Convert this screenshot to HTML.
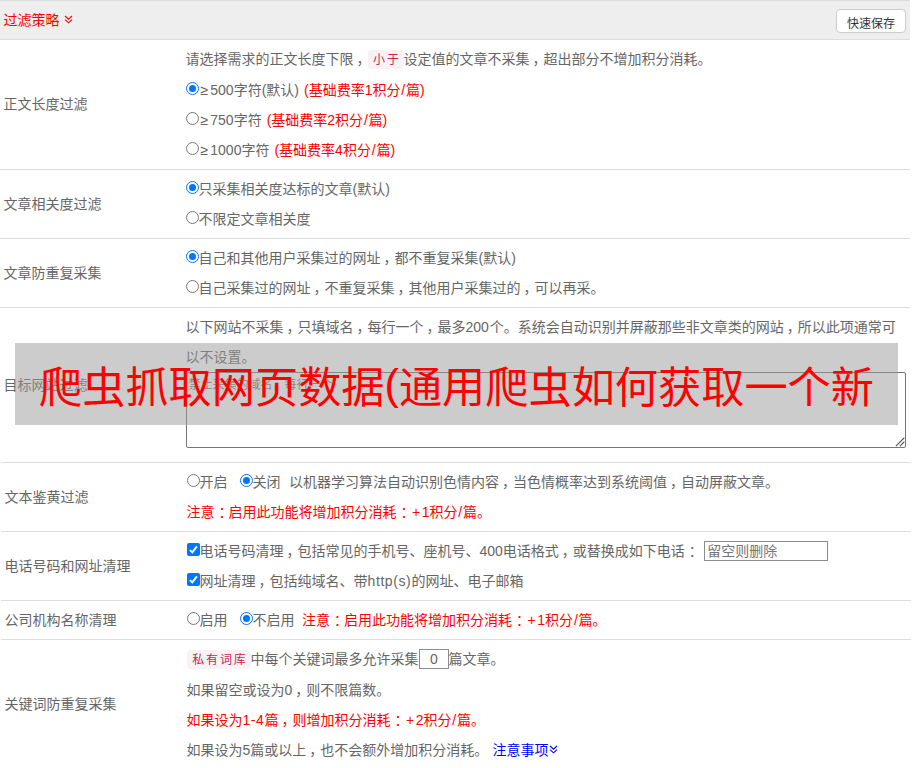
<!DOCTYPE html>
<html lang="zh-CN">
<head>
<meta charset="utf-8">
<title>过滤策略</title>
<style>
html,body{margin:0;padding:0;background:#fff;}
body{width:912px;height:768px;overflow:hidden;position:relative;
  font-family:"Liberation Sans","Noto Sans CJK SC",sans-serif;font-size:14px;line-height:30px;color:#666;}
#wrap{position:absolute;left:0;top:0;width:910px;}
.hd{height:38px;background:#eee;border-top:1px solid #ddd;border-bottom:1px solid #ddd;position:relative;}
.hd .t{position:absolute;left:3.5px;top:4px;color:#f00;line-height:30px;white-space:nowrap;}
.hd .btn{position:absolute;left:836px;top:8px;width:70px;height:24px;box-sizing:border-box;border:1px solid #ccc;border-radius:4px;background:#fff;
  color:#333;font-size:12px;line-height:28px;text-align:center;font-family:inherit;padding:0 0 0 0;overflow:visible;}
.row{border-top:1px solid #ddd;position:relative;box-sizing:border-box;width:910px;}
.sh{margin-left:1px;}
.lab{position:absolute;left:3.5px;line-height:30px;white-space:nowrap;}
.c{position:absolute;left:185.5px;top:4px;right:4px;}
.l{height:30px;line-height:30px;white-space:nowrap;position:relative;}
.l b{font-weight:normal;display:inline-block;text-align:center;}
.red{color:#f00;}
.rd{display:inline-block;width:13px;height:13px;box-sizing:border-box;border:1px solid #767676;border-radius:50%;background:#fff;vertical-align:middle;position:relative;top:-3px;margin:0 -.5px 0 .5px;}
.rd.on{border-color:#0075ff;}
.rd.on:after{content:"";position:absolute;left:2px;top:2px;width:7px;height:7px;border-radius:50%;background:#0075ff;}
.cb{display:inline-block;width:13px;height:13px;box-sizing:border-box;border-radius:2px;background:#0075ff;vertical-align:middle;position:relative;top:-3px;margin:0 -.5px 0 .5px;}
.cb svg{position:absolute;left:0;top:0;}
code{margin-left:.5px;margin-right:-.5px;display:inline-block;box-sizing:border-box;height:19px;vertical-align:top;margin-top:6px;font-family:"Liberation Mono","Noto Sans CJK SC",monospace;font-size:12px;color:#c7254e;background:#f9f2f4;border-radius:4px;padding:0 0 0 1.9px;line-height:22px;letter-spacing:1.9px;overflow:hidden;text-align:center;}
.l1{height:31px;}
.pc{position:relative;left:3px;}
.co{position:relative;left:4px;}
.ti{margin-left:.5px;margin-right:-.5px;display:inline-block;position:relative;top:-1px;box-sizing:border-box;border:1px solid #8c8c8c;background:#fff;vertical-align:middle;font-size:14px;color:#757575;}
.ta{position:absolute;left:.5px;top:60px;width:720px;height:76px;box-sizing:border-box;border:1px solid #767676;border-radius:2px;}
.ta .ph{position:absolute;left:1.5px;top:3px;font-size:12px;line-height:18px;color:#757575;}
.ta svg{position:absolute;right:0;bottom:0;}
#wm{position:absolute;left:15px;top:343px;width:883px;height:82px;background:rgba(153,153,153,0.5);color:#f00;font-size:43.2px;line-height:90px;text-align:center;overflow:hidden;box-sizing:border-box;white-space:nowrap;z-index:5;}
.g{display:inline-block;}
.pa{position:relative;top:-4px;}
.chev{position:relative;top:-0.8px;}
</style>
</head>
<body>
<div id="wrap">
<div class="hd"><span class="t">过滤策略<i class="g" style="width:4px"></i><svg class="chev" width="9" height="9" viewBox="0 0 9 9"><path d="M1 1L4.5 4.2L8 1M1 4.6L4.5 7.8L8 4.6" stroke="currentColor" stroke-width="1.12" fill="none"/></svg></span><button class="btn">快速保存</button></div>
<div class="row" style="height:129px;border-top:0">
  <div class="lab" style="top:49px">正文长度过滤</div>
  <div class="c">
    <div class="l l1">请选择需求的正文长度下限<span class="pc">，</span><code style="width:36px">小于</code>设定值的文章不采集<span class="pc">，</span>超出部分不增加积分消耗。</div>
    <div class="l"><span class="rd on"></span><b style="width:11.8px">≥</b>500字符(默认)<i class="g" style="width:5px"></i><span class="red">(基础费率1积分<b style="width:5.5px">/</b>篇)</span></div>
    <div class="l"><span class="rd"></span><b style="width:11.8px">≥</b>750字符<i class="g" style="width:5px"></i><span class="red">(基础费率2积分<b style="width:5.5px">/</b>篇)</span></div>
    <div class="l"><span class="rd"></span><b style="width:11.8px">≥</b>1000字符<i class="g" style="width:5px"></i><span class="red">(基础费率4积分<b style="width:5.5px">/</b>篇)</span></div>
  </div>
</div>
<div class="row" style="height:69px">
  <div class="lab" style="top:19px">文章相关度过滤</div>
  <div class="c">
    <div class="l"><span class="rd on"></span>只采集相关度达标的文章(默认)</div>
    <div class="l"><span class="rd"></span>不限定文章相关度</div>
  </div>
</div>
<div class="row" style="height:69px">
  <div class="lab" style="top:19px">文章防重复采集</div>
  <div class="c">
    <div class="l"><span class="rd on"></span>自己和其他用户采集过的网址<span class="pc">，</span>都不重复采集(默认)</div>
    <div class="l"><span class="rd"></span>自己采集过的网址<span class="pc">，</span>不重复采集<span class="pc">，</span>其他用户采集过的<span class="pc">，</span>可以再采。</div>
  </div>
</div>
<div class="row" style="height:155px">
  <div class="lab" style="top:62px">目标网站过滤</div>
  <div class="c">
    <div class="l">以下网站不采集<span class="pc">，</span>只填域名<span class="pc">，</span>每行一个<span class="pc">，</span>最多200<i class="g" style="width:1px"></i>个。系统会自动识别并屏蔽那些非文章类的网站<span class="pc">，</span>所以此项通常可</div>
    <div class="l">以不设置。</div>
    <div class="ta"><span class="ph">禁止采集的域名，每行一个</span><svg width="10" height="10" viewBox="0 0 10 10"><path d="M1.2 8.8L9 1M5.2 8.8L9 5" stroke="#555" stroke-width="1.1" stroke-linecap="round" fill="none"/></svg></div>
  </div>
</div>
<div class="row sh" style="height:69px">
  <div class="lab" style="top:19px">文本鉴黄过滤</div>
  <div class="c">
    <div class="l"><span class="rd"></span>开启<i class="g" style="width:12px"></i><span class="rd on"></span>关闭<i class="g" style="width:8.6px"></i>以机器学习算法自动识别色情内容<span class="pc">，</span>当色情概率达到系统阈值<span class="pc">，</span>自动屏蔽文章。</div>
    <div class="l"><span class="red">注意<span class="co">：</span>启用此功能将增加积分消耗<span class="co">：</span><b style="width:11.2px">+</b>1积分<b style="width:5.5px">/</b>篇。</span></div>
  </div>
</div>
<div class="row sh" style="height:69px">
  <div class="lab" style="top:19px">电话号码和网址清理</div>
  <div class="c">
    <div class="l"><span class="cb"><svg width="13" height="13" viewBox="0 0 13 13"><path d="M2.9 7.1L5.3 9.3L9.9 3.3" stroke="#fff" stroke-width="1.9" fill="none"/></svg></span>电话号码清理<span class="pc">，</span>包括常见的手机号、座机号、400电话格式<span class="pc">，</span>或替换成如下电话<span class="co">：</span><i class="g" style="width:5px"></i><span class="ti" style="width:124px;height:20px;line-height:18px;padding-left:2px;">留空则删除</span></div>
    <div class="l"><span class="cb"><svg width="13" height="13" viewBox="0 0 13 13"><path d="M2.9 7.1L5.3 9.3L9.9 3.3" stroke="#fff" stroke-width="1.9" fill="none"/></svg></span>网址清理<span class="pc">，</span>包括纯域名、带<span style="letter-spacing:0.6px">http(s)</span>的网址、电子邮箱</div>
  </div>
</div>
<div class="row sh" style="height:39px">
  <div class="lab" style="top:4px">公司机构名称清理</div>
  <div class="c">
    <div class="l"><span class="rd"></span>启用<i class="g" style="width:12px"></i><span class="rd on"></span>不启用<i class="g" style="width:7.6px"></i><span class="red">注意<span class="co">：</span>启用此功能将增加积分消耗<span class="co">：</span><b style="width:11.2px">+</b>1积分<b style="width:5.5px">/</b>篇。</span></div>
  </div>
</div>
<div class="row sh" style="height:130px">
  <div class="lab" style="top:49px">关键词防重复采集</div>
  <div class="c">
    <div class="l l1"><code style="width:64px">私有词库</code>中每个关键词最多允许采集<span class="ti" style="width:30px;height:20px;line-height:18px;text-align:center;color:#666;">0</span>篇文章。</div>
    <div class="l">如果留空或设为0<span class="pc">，</span>则不限篇数。</div>
    <div class="l"><span class="red">如果设为1<b style="width:5.6px">-</b>4<i class="g" style="width:0.8px"></i>篇<span class="pc">，</span>则增加积分消耗<span class="co">：</span><b style="width:11.2px">+</b>2积分<b style="width:5.5px">/</b>篇。</span></div>
    <div class="l">如果设为5篇或以上<span class="pc">，</span>也不会额外增加积分消耗。<i class="g" style="width:4.2px"></i><span style="color:#00f">注意事项<i class="g" style="width:1px"></i><svg class="chev" width="9" height="9" viewBox="0 0 9 9"><path d="M1 1L4.5 4.2L8 1M1 4.6L4.5 7.8L8 4.6" stroke="currentColor" stroke-width="1.1" fill="none"/></svg></span></div>
  </div>
</div>
</div>
<div id="wm">爬虫抓取网页数据<span class="pa">(</span>通用爬虫如何获取一个新</div>
</body>
</html>
